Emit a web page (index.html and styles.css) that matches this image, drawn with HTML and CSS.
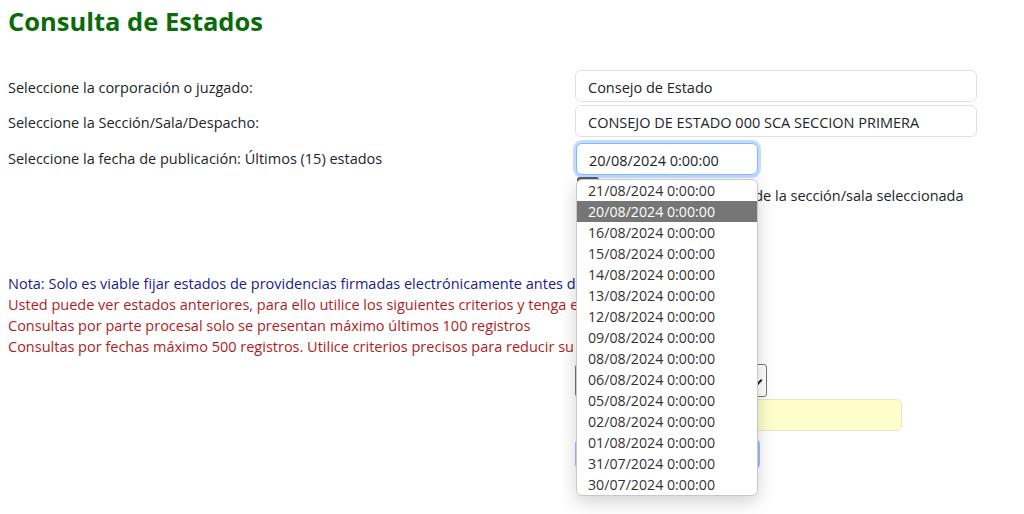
FILE: index.html
```html
<!DOCTYPE html>
<html lang="es">
<head>
    <meta charset="UTF-8">
    <title>Consulta de Estados</title>
    <link rel="stylesheet" href="styles.css">
</head>
<body>

    <h1 class="titulo">Consulta de Estados</h1>

    <div class="form-row">
        <label>Seleccione la corporación o juzgado:</label>
        <div class="campo">Consejo de Estado</div>
    </div>

    <div class="form-row">
        <label>Seleccione la Sección/Sala/Despacho:</label>
        <div class="campo">CONSEJO DE ESTADO 000 SCA SECCION PRIMERA</div>
    </div>

    <div class="form-row">
        <label>Seleccione la fecha de publicación: Últimos (15) estados</label>
        <div class="fecha-wrap">
            <div class="campo fecha activo">20/08/2024 0:00:00</div>
            <!-- lista desplegada del select -->
            <ul class="lista-fechas">
                <li>21/08/2024 0:00:00</li>
                <li class="sel">20/08/2024 0:00:00</li>
                <li>16/08/2024 0:00:00</li>
                <li>15/08/2024 0:00:00</li>
                <li>14/08/2024 0:00:00</li>
                <li>13/08/2024 0:00:00</li>
                <li>12/08/2024 0:00:00</li>
                <li>09/08/2024 0:00:00</li>
                <li>08/08/2024 0:00:00</li>
                <li>06/08/2024 0:00:00</li>
                <li>05/08/2024 0:00:00</li>
                <li>02/08/2024 0:00:00</li>
                <li>01/08/2024 0:00:00</li>
                <li>31/07/2024 0:00:00</li>
                <li>30/07/2024 0:00:00</li>
            </ul>
        </div>
    </div>

    <div class="check-row">
        <span class="btn-oscuro"></span>
        <span class="check-texto">Ver todos los estados de la sección/sala seleccionada</span>
    </div>

    <div class="notas">
        <p class="nota-azul">Nota: Solo es viable fijar estados de providencias firmadas electrónicamente antes de la fecha del estado.</p>
        <p class="nota-roja">Usted puede ver estados anteriores, para ello utilice los siguientes criterios y tenga en cuenta:</p>
        <p class="nota-roja">Consultas por parte procesal solo se presentan máximo últimos 100 registros</p>
        <p class="nota-roja">Consultas por fechas máximo 500 registros. Utilice criterios precisos para reducir su búsqueda</p>
    </div>

    <div class="filtros">
        <div class="select-criterio">
            <span class="flecha"></span>
        </div>
        <div class="input-amarillo"></div>
        <div class="btn-buscar"></div>
    </div>

</body>
</html>
```

FILE: styles.css
```css
/* Estilos generales */
html, body {
    min-height: 100%;
}

body {
    font-family: 'Open Sans', 'Noto Sans', sans-serif;
    font-size: 14.5px;
    color: #212529;
    background: #fff;
    margin: 0;
    padding: 0 8px 60px;
}

.titulo {
    color: #0a6b0a;
    font-size: 25.5px;
    font-weight: bold;
    margin: 4px 0 0;
    line-height: 34px;
}

/* Filas del formulario */
.form-row {
    display: grid;
    grid-template-columns: 567px 402px;
    align-items: center;
}

.form-row:nth-of-type(1) {
    margin-top: 32px;
}

.form-row + .form-row {
    margin-top: 3px;
}

.form-row label {
    padding-top: 2px;
}

.campo {
    height: 32px;
    box-sizing: border-box;
    border: 1px solid #dee2e6;
    border-radius: 6px;
    padding: 2px 12px 0;
    display: flex;
    align-items: center;
    background: #fff;
}

.fecha-wrap {
    position: relative;
    margin-top: 3px;
}

.fecha {
    width: 182px;
    margin-left: 1px;
}

.activo {
    border-color: #86b7fe;
    box-shadow: 0 0 0 3px rgba(13, 110, 253, 0.25);
}

.lista-fechas {
    position: absolute;
    top: 36px;
    left: 1px;
    width: 182px;
    box-sizing: border-box;
    margin: 0;
    padding: 0;
    list-style: none;
    background: #fff;
    border: 1px solid #c8c8c8;
    border-radius: 6px;
    box-shadow: 0 6px 18px rgba(0, 0, 0, 0.18);
    overflow: hidden;
    z-index: 10;
    font-size: 14.2px;
}

.lista-fechas li {
    height: 21px;
    line-height: 21px;
    padding-left: 11px;
    color: #333;
}

.lista-fechas li.sel {
    background: #767676;
    color: #fff;
}

/* Fila del check */
.check-row {
    display: flex;
    align-items: center;
    gap: 7px;
    padding-left: 569px;
    margin-top: 2px;
    height: 36px;
}

.btn-oscuro {
    align-self: flex-start;
    width: 22px;
    height: 24px;
    background: #5a5a5a;
    border-radius: 3px;
}

/* Notas */
.notas {
    margin-top: 60px;
}

.notas p {
    margin: 0;
    line-height: 21px;
}

.nota-azul {
    color: #1a1a8a;
}

.nota-roja {
    color: #b01c1c;
}

/* Filtros inferiores */
.filtros {
    padding-left: 567px;
    margin-top: 7px;
}

.select-criterio {
    position: relative;
    width: 192px;
    height: 33px;
    box-sizing: border-box;
    border: 1px solid #767676;
    border-radius: 3px;
}

.flecha {
    position: absolute;
    right: 5px;
    top: 12px;
    width: 5px;
    height: 5px;
    border-right: 2px solid #222;
    border-bottom: 2px solid #222;
    transform: rotate(45deg);
}

.input-amarillo {
    width: 326px;
    height: 32px;
    box-sizing: border-box;
    margin: 2px 0 0 1px;
    background: #ffffcc;
    border: 1px solid #e6e6c8;
    border-radius: 5px;
}

.btn-buscar {
    width: 185px;
    height: 30px;
    margin-top: 8px;
    background: #9fc0f2;
    border-radius: 5px;
}
```
